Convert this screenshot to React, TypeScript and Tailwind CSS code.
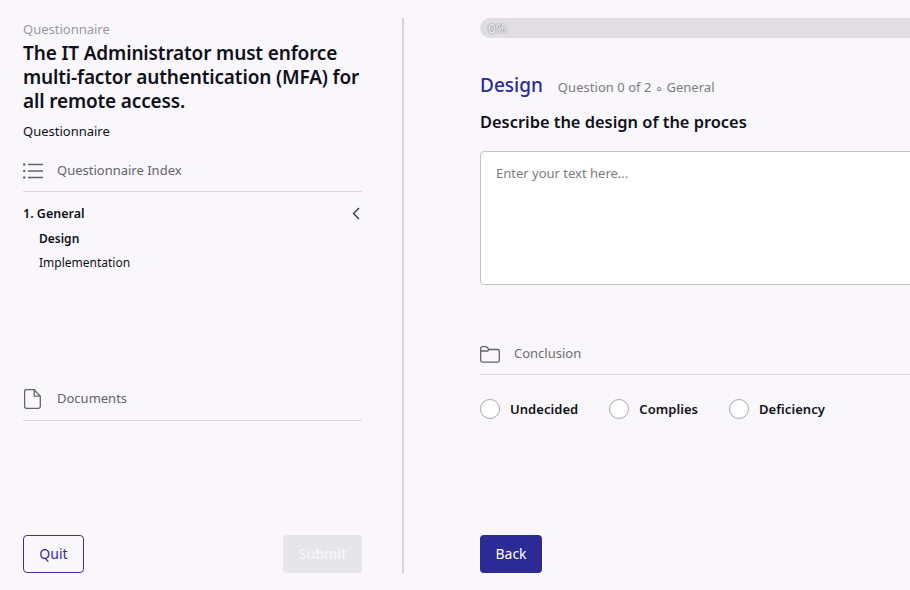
import React from "react";

const F = "font-['Noto_Sans',sans-serif]";

function ListIcon() {
  return (
    <svg width="20" height="16" viewBox="0 0 20 16" fill="none" stroke="#66636c" strokeWidth="1.3">
      <path d="M5 1.5h15M5 8h15M5 14.5h15" />
      <circle cx="1.2" cy="1.5" r="1.2" fill="#66636c" stroke="none" />
      <circle cx="1.2" cy="8" r="1.2" fill="#66636c" stroke="none" />
      <circle cx="1.2" cy="14.5" r="1.2" fill="#66636c" stroke="none" />
    </svg>
  );
}
function DocIcon() {
  return (
    <svg width="17" height="20" viewBox="0 0 17 20" fill="none" stroke="#66636c" strokeWidth="1.3" strokeLinejoin="round">
      <path d="M2.3.7h7.9l6.1 6.5v10.3c0 1-.8 1.8-1.8 1.8H2.3c-1 0-1.7-.8-1.7-1.8V2.5C.6 1.5 1.3.7 2.3.7Z" />
      <path d="M10.2.7v6.5h6.1" />
    </svg>
  );
}
function FolderIcon() {
  return (
    <svg width="20" height="17" viewBox="0 0 20 17" fill="none" stroke="#66636c" strokeWidth="1.3" strokeLinejoin="round">
      <path d="M.7 2.4C.7 1.4 1.5.7 2.4.7h3.3c.6 0 1.1.3 1.5.8l1.6 2h8.8c1 0 1.7.8 1.7 1.7v9.2c0 1-.8 1.8-1.7 1.8H2.4c-1 0-1.7-.8-1.7-1.8V2.4Z" />
      <path d="M.7 5h7.2l.9-1.5" />
    </svg>
  );
}
function Radio({ label }: { label: string }) {
  return (
    <label className="flex items-start gap-[10px]">
      <span className="w-5 h-5 rounded-full bg-white border border-[#a9a7ad]" />
      <span className="mt-px text-[13px] leading-[18px] tracking-[0.05px] font-semibold text-[#11101a]">{label}</span>
    </label>
  );
}

export default function App() {
  return (
    <div className={`${F} w-[910px] h-[590px] overflow-hidden bg-[#f9f7fb] flex pt-[18px] pb-[17px]`}>
      <aside className="w-[404px] shrink-0 pl-[23px] pr-10 border-r-2 border-[#d6d4d9] flex flex-col">
        <div className="text-[13px] leading-[22px] text-[#9a989e]">Questionnaire</div>
        <h1 className="mt-px text-[19px] tracking-[-0.15px] leading-[24px] font-semibold text-[#11101a]">
          The IT Administrator must enforce multi-factor authentication (MFA) for all remote access.
        </h1>
        <div className="mt-[9px] text-[13px] leading-[18px] text-[#11101a]">Questionnaire</div>
        <div className="mt-[9px] h-[43px] pt-[2px] flex items-center gap-[14px] border-b border-[#d9d7dc]">
          <ListIcon />
          <span className="text-[13px] text-[#66636c]">Questionnaire Index</span>
        </div>
        <div className="mt-3 h-5 flex items-center justify-between text-[12.5px] font-semibold text-[#11101a]">
          <span>1. General</span>
          <svg width="8" height="13" viewBox="0 0 8 13" fill="none" stroke="#2a2930" strokeWidth="1.3" className="mr-[2px] mb-[2px]">
            <path d="M7 1 1.5 6.5 7 12" />
          </svg>
        </div>
        <div className="mt-[3px] pl-4 text-[12px] leading-[24px] text-[#11101a]">
          <div className="font-semibold">Design</div>
          <div>Implementation</div>
        </div>
        <div className="mt-[101px] h-[45px] pt-[2px] flex items-center gap-[16px] border-b border-[#d9d7dc] pl-[1px]">
          <DocIcon />
          <span className="text-[13px] text-[#66636c]">Documents</span>
        </div>
        <div className="mt-auto flex justify-between">
          <button className="w-[61px] h-[38px] rounded border border-[#3f2f9b] text-sm text-[#3a2a98]">Quit</button>
          <button className="w-[79px] h-[38px] rounded bg-[#e6e5e8] text-sm font-medium text-[#f7f6f8]">Submit</button>
        </div>
      </aside>
      <main className="ml-[76px] w-[600px] shrink-0 flex flex-col">
        <div className="h-5 rounded-l-[10px] bg-[#e0dee1] flex items-center">
          <span className="pl-2 text-[13px] leading-5 text-[#f5f4f6] [text-shadow:0_0_2px_#55535a]">0%</span>
        </div>
        <div className="mt-[32px] flex items-baseline gap-[15px]">
          <h2 className="text-[19px] leading-[30px] font-medium text-[#2b2a96]">Design</h2>
          <span className="text-[13px] tracking-[0.04px] text-[#7d7b82]">Question 0 of 2 ∘ General</span>
        </div>
        <h3 className="mt-[10px] text-[16.4px] leading-[24px] font-semibold text-[#11101a]">Describe the design of the proces</h3>
        <textarea
          className="mt-[17px] h-[134px] w-full resize-none rounded border border-[#c4c2c7] bg-white px-[15px] py-[11px] text-[13px] leading-[20px] outline-none placeholder:text-[#7d7b82]"
          placeholder="Enter your text here..."
        />
        <div className="mt-[47px] h-[43px] pt-[2px] flex items-center gap-[14px] border-b border-[#d9d7dc]">
          <FolderIcon />
          <span className="text-[13px] text-[#6e6b74]">Conclusion</span>
        </div>
        <div className="mt-6 flex gap-[31px]">
          <Radio label="Undecided" />
          <Radio label="Complies" />
          <Radio label="Deficiency" />
        </div>
        <button className="mt-auto w-[62px] h-[38px] rounded bg-[#2b2a96] text-sm text-white">Back</button>
      </main>
    </div>
  );
}
